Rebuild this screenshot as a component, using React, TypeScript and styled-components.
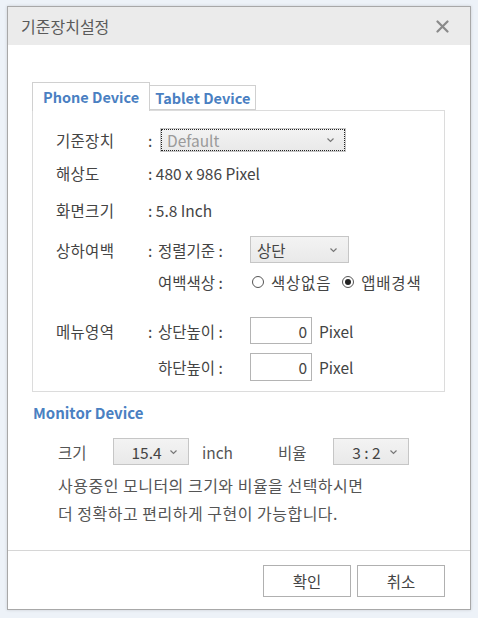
import React from 'react';
import styled, {createGlobalStyle} from 'styled-components';

const GlobalStyle = createGlobalStyle`
  html, body {
    margin: 0;
    padding: 0;
    background: #edf2f8;
  }
  body {
    font-family: "Noto Sans CJK KR", "Noto Sans", sans-serif;
    color: #444;
  }
`;

const Chevron = () => (
    <svg width="9" height="6" viewBox="0 0 9 6">
        <path d="M1.5 1.5 L4.5 4.4 L7.5 1.5" fill="none" stroke="#777" strokeWidth="1.2"/>
    </svg>
);

const CloseIcon = () => (
    <svg width="13" height="13" viewBox="0 0 13 13">
        <path d="M1.5 1.5 L11.5 11.5 M11.5 1.5 L1.5 11.5" stroke="#8a8a8a" strokeWidth="2.2" strokeLinecap="round"/>
    </svg>
);

interface ISelectProps {
    value: string;
    width: number;
    height: number;
    focused?: boolean;
    muted?: boolean;
    center?: boolean;
}

const Select = ({value, width, height, focused, muted, center}: ISelectProps) => (
    <SelectBox $w={width} $h={height} $focused={focused}>
        <SelectText $muted={muted} $center={center}>{value}</SelectText>
        <Chevron/>
    </SelectBox>
);

const Radio = ({checked, label}: { checked?: boolean; label: string }) => (
    <RadioItem>
        <RadioCircle $checked={checked}/>
        <span>{label}</span>
    </RadioItem>
);

const App = () => {
    return (
        <>
            <GlobalStyle/>
            <Page>
                <Dialog>
                    <Header>
                        <span className='title'>기준장치설정</span>
                        <CloseIcon/>
                    </Header>
                    <Body>
                        <Tabs>
                            <Tab $active>Phone Device</Tab>
                            <Tab>Tablet Device</Tab>
                        </Tabs>
                        <Panel>
                            <Row $mt={0} $h={24}>
                                <Label>기준장치</Label>
                                <Colon $w={12}>:</Colon>
                                <Select value='Default' width={186} height={24} focused muted/>
                            </Row>
                            <Row $mt={9} $h={24}>
                                <Label>해상도</Label>
                                <Value>: 480 x 986 Pixel</Value>
                            </Row>
                            <Row $mt={13} $h={24}>
                                <Label>화면크기</Label>
                                <Value>: 5.8 Inch</Value>
                            </Row>
                            <Row $mt={14} $h={26} $baseline>
                                <Label>상하여백</Label>
                                <Colon $w={10}>:</Colon>
                                <SubLabel>정렬기준 :</SubLabel>
                                <Select value='상단' width={99} height={27}/>
                            </Row>
                            <Row $mt={8} $h={24}>
                                <Label/>
                                <Colon $w={10}/>
                                <SubLabel>여백색상 :</SubLabel>
                                <Radios>
                                    <Radio label='색상없음'/>
                                    <Radio label='앱배경색' checked/>
                                </Radios>
                            </Row>
                            <Row $mt={23} $h={27}>
                                <Label>메뉴영역</Label>
                                <Colon $w={10}>:</Colon>
                                <SubLabel>상단높이 :</SubLabel>
                                <NumberBox>0</NumberBox>
                                <Unit>Pixel</Unit>
                            </Row>
                            <Row $mt={9} $h={28}>
                                <Label/>
                                <Colon $w={10}/>
                                <SubLabel>하단높이 :</SubLabel>
                                <NumberBox>0</NumberBox>
                                <Unit>Pixel</Unit>
                            </Row>
                        </Panel>
                        <SectionTitle>Monitor Device</SectionTitle>
                        <MonitorRow>
                            <span className='m_label'>크기</span>
                            <Select value='15.4' width={76} height={27} center/>
                            <span className='unit'>inch</span>
                            <span className='m_label ratio'>비율</span>
                            <Select value='3 : 2' width={76} height={27} center/>
                        </MonitorRow>
                        <Notice>
                            <p>사용중인 모니터의 크기와 비율을 선택하시면</p>
                            <p>더 정확하고 편리하게 구현이 가능합니다.</p>
                        </Notice>
                    </Body>
                    <Footer>
                        <Button>확인</Button>
                        <Button>취소</Button>
                    </Footer>
                </Dialog>
            </Page>
        </>
    );
};

const Page = styled.div`
  width: 478px;
  height: 618px;
  padding: 6px 7px 0 7px;
  box-sizing: border-box;
`;

const Dialog = styled.div`
  width: 464px;
  height: 604px;
  box-sizing: border-box;
  background: #ffffff;
  border: 1px solid #a8a8a8;
  box-shadow: 0 0 3px rgba(0, 0, 0, 0.15);
  display: flex;
  flex-direction: column;
`;

const Header = styled.div`
  height: 38px;
  background: #ebebeb;
  display: flex;
  align-items: center;
  justify-content: space-between;
  padding: 0 21px 0 13px;

  .title {
    font-size: 16px;
    color: #5a5a5a;
  }
`;

const Body = styled.div`
  flex: 1;
  padding: 37px 25px 0 24px;
  border-bottom: 1px solid #d6d6d6;
`;

const Tabs = styled.div`
  display: flex;
  align-items: flex-end;
  height: 28px;
`;

const Tab = styled.div<{ $active?: boolean }>`
  box-sizing: border-box;
  height: ${p => p.$active ? 29 : 25}px;
  padding: 0 ${p => p.$active ? 10 : 5}px;
  border: 1px solid #d0d0d0;
  border-bottom: ${p => p.$active ? 'none' : '1px solid #d0d0d0'};
  border-left: ${p => p.$active ? '1px solid #d0d0d0' : 'none'};
  background: #ffffff;
  margin-bottom: ${p => p.$active ? -1 : 0}px;
  position: relative;
  z-index: ${p => p.$active ? 1 : 0};
  color: #4a80c2;
  font-weight: 700;
  font-size: 14.5px;
  display: flex;
  align-items: center;
  line-height: 1;
  padding-top: ${p => p.$active ? 0 : 2}px;
`;

const Panel = styled.div`
  box-sizing: border-box;
  height: 282px;
  border: 1px solid #dcdcdc;
  padding: 17px 0 0 23px;
  display: flex;
  flex-direction: column;
`;

const Row = styled.div<{ $mt: number; $h: number; $baseline?: boolean }>`
  display: flex;
  align-items: ${p => p.$baseline ? 'baseline' : 'center'};
  margin-top: ${p => p.$mt}px;
  height: ${p => p.$h}px;
  font-size: 15.5px;
  color: #444;
`;

const Label = styled.span`
  width: 92px;
  flex-shrink: 0;
  letter-spacing: 0.3px;
`;

const Colon = styled.span<{ $w: number }>`
  width: ${p => p.$w}px;
  flex-shrink: 0;
`;

const Value = styled.span`
  white-space: nowrap;
`;

const SubLabel = styled.span`
  width: 92px;
  flex-shrink: 0;
  white-space: nowrap;
`;

const SelectBox = styled.div<{ $w: number; $h: number; $focused?: boolean }>`
  box-sizing: border-box;
  width: ${p => p.$w}px;
  height: ${p => p.$h}px;
  background: linear-gradient(#f3f3f3, #e9e9e9);
  border: 1px solid #c6c6c6;
  outline: ${p => p.$focused ? '1px dotted #222' : 'none'};
  outline-offset: -2px;
  display: flex;
  align-items: center;
  justify-content: space-between;
  padding: 0 10px 0 6px;
  font-size: 15.5px;
  flex-shrink: 0;
`;

const SelectText = styled.span<{ $muted?: boolean; $center?: boolean }>`
  color: ${p => p.$muted ? '#9a9a9a' : '#444'};
  flex: 1;
  text-align: ${p => p.$center ? 'center' : 'left'};
  padding-left: ${p => p.$center ? 4 : 0}px;
`;

const Radios = styled.div`
  display: flex;
  align-items: center;
  gap: 11px;
  margin-left: 2px;
`;

const RadioItem = styled.label`
  display: flex;
  align-items: center;
  gap: 7px;
  letter-spacing: 0.8px;
`;

const RadioCircle = styled.span<{ $checked?: boolean }>`
  box-sizing: border-box;
  width: 12px;
  height: 12px;
  border: 1px solid #555;
  border-radius: 50%;
  display: flex;
  align-items: center;
  justify-content: center;

  &::after {
    content: '';
    display: ${p => p.$checked ? 'block' : 'none'};
    width: 6px;
    height: 6px;
    border-radius: 50%;
    background: #222;
  }
`;

const NumberBox = styled.div`
  box-sizing: border-box;
  width: 62px;
  height: 100%;
  border: 1px solid #b4b4b4;
  padding-right: 4px;
  display: flex;
  align-items: center;
  justify-content: flex-end;
`;

const Unit = styled.span`
  margin-left: 7px;
`;

const SectionTitle = styled.div`
  margin-top: 11px;
  padding-left: 1px;
  height: 20px;
  line-height: 20px;
  font-size: 15px;
  font-weight: 700;
  color: #4a80c2;
`;

const MonitorRow = styled.div`
  display: flex;
  align-items: center;
  margin-top: 15px;
  padding-left: 26px;
  height: 27px;
  font-size: 15.5px;
  color: #555;

  .m_label {
    width: 55px;
  }

  .unit {
    margin-left: 13px;
    width: 76px;
  }

  .ratio {
    width: 55px;
  }
`;

const Notice = styled.div`
  padding-left: 26px;
  margin-top: 6px;
  font-size: 16px;
  letter-spacing: 0.5px;
  color: #555;

  p {
    margin: 0;
    line-height: 28px;
  }
`;

const Footer = styled.div`
  display: flex;
  justify-content: flex-end;
  gap: 6px;
  padding: 14px 25px 12px 0;
`;

const Button = styled.button`
  width: 88px;
  height: 32px;
  background: #ffffff;
  border: 1px solid #b0b0b0;
  font-family: "Noto Sans CJK KR", sans-serif;
  font-size: 15.5px;
  color: #444;
  padding: 0;
`;

export default App;
